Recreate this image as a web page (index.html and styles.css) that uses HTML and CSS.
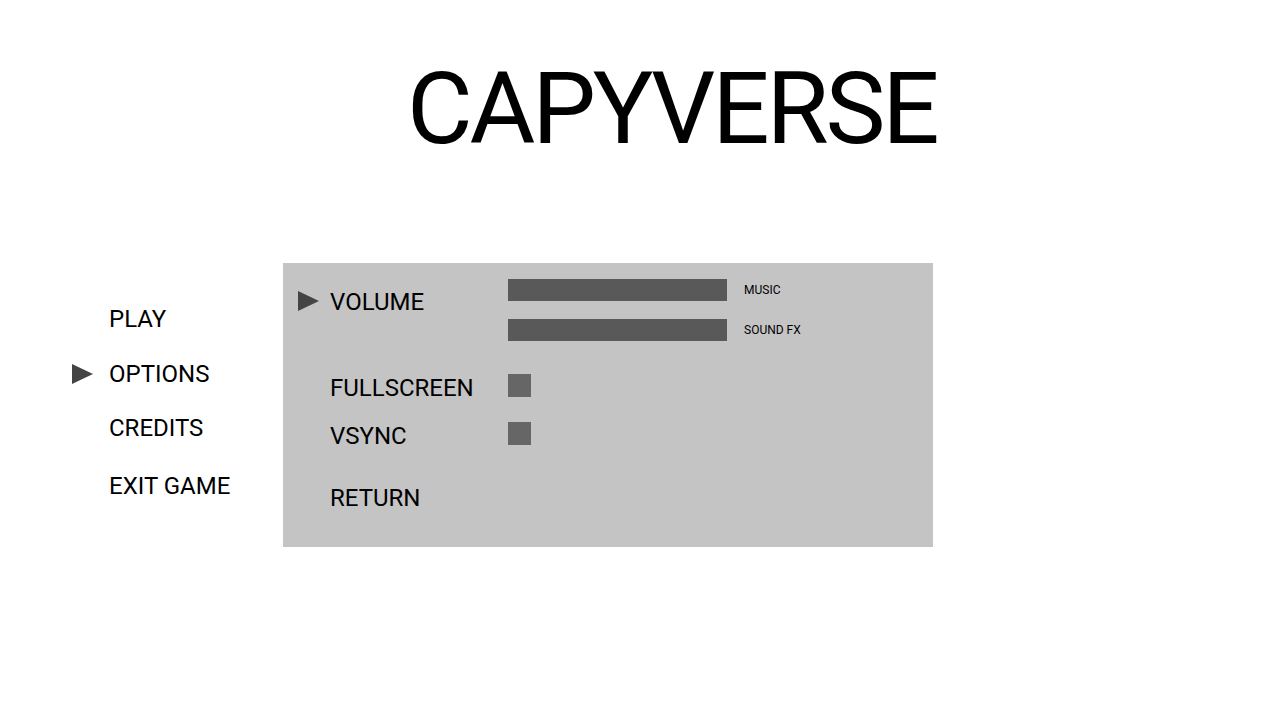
FILE: index.html
```html
<!DOCTYPE html>
<html lang="en">
<head>
    <meta charset="UTF-8">
    <meta name="viewport" content="width=device-width, initial-scale=1.0">
    <title>Capyverse</title>
    <link rel="stylesheet" href="styles.css">
</head>
<body>
    <h1 class="title">CAPYVERSE</h1>

    <div class="main">
        <!-- main menu -->
        <ul class="menu">
            <li class="menuItem"><span class="marker"></span><span>PLAY</span></li>
            <li class="menuItem current"><span class="marker"><span class="arrow"></span></span><span>OPTIONS</span></li>
            <li class="menuItem"><span class="marker"></span><span>CREDITS</span></li>
            <li class="menuItem exit"><span class="marker"></span><span>EXIT GAME</span></li>
        </ul>

        <!-- options panel -->
        <div class="panel">
            <div class="optRow volumeRow">
                <span class="marker"><span class="arrow"></span></span>
                <span class="optLabel">VOLUME</span>
                <div class="sliders">
                    <div class="slider"><span class="bar"></span><span class="small">MUSIC</span></div>
                    <div class="slider"><span class="bar"></span><span class="small">SOUND FX</span></div>
                </div>
            </div>
            <div class="optRow fullRow">
                <span class="marker"></span>
                <span class="optLabel">FULLSCREEN</span>
                <span class="check"></span>
            </div>
            <div class="optRow vsyncRow">
                <span class="marker"></span>
                <span class="optLabel">VSYNC</span>
                <span class="check"></span>
            </div>
            <div class="optRow returnRow">
                <span class="marker"></span>
                <span class="optLabel">RETURN</span>
            </div>
        </div>
    </div>
</body>
</html>
```

FILE: styles.css
```css
body {
    margin: 0;
    font-family: Roboto, "Liberation Sans", sans-serif;
    background: #ffffff;
    color: #000000;
}

.title {
    margin: 49px 0 0 0;
    padding-left: 407px;
    font-size: 101px;
    font-weight: 400;
    letter-spacing: -3.2px;
    line-height: normal;
}

.main {
    display: flex;
    align-items: flex-start;
    margin-top: 95px;
    padding-left: 72px;
}

/* left menu */
.menu {
    list-style: none;
    margin: 0;
    padding: 42px 0 0 0;
    width: 211px;
    display: flex;
    flex-direction: column;
    gap: 26px;
}

.menuItem {
    display: flex;
    align-items: center;
    height: 28px;
    font-size: 24px;
    line-height: 28px;
}

.menuItem .marker {
    width: 37px;
}

.menuItem.current {
    margin-top: 1px;
}

.menuItem.exit {
    margin-top: 4px;
}

.marker {
    display: flex;
    align-items: center;
    flex-shrink: 0;
}

.arrow {
    width: 0;
    height: 0;
    border-top: 10.5px solid transparent;
    border-bottom: 10.5px solid transparent;
    border-left: 21px solid #444444;
}

/* options panel */
.panel {
    width: 650px;
    height: 284px;
    box-sizing: border-box;
    background: #c4c4c4;
    padding: 16px 0 0 15px;
}

.optRow {
    display: flex;
    align-items: flex-start;
    font-size: 24px;
    line-height: 28px;
}

.optRow .marker {
    width: 32px;
    height: 28px;
}

.optLabel {
    width: 178px;
}

.volumeRow .marker {
    margin-top: 8px;
}

.volumeRow .optLabel {
    margin-top: 9px;
}

.sliders {
    display: flex;
    flex-direction: column;
    gap: 18px;
}

.slider {
    display: flex;
    align-items: center;
    height: 22px;
}

.bar {
    width: 219px;
    height: 22px;
    background: #595959;
}

.small {
    margin-left: 17px;
    font-size: 12px;
    line-height: 16px;
}

.check {
    width: 23px;
    height: 23px;
    background: #666666;
}

.fullRow {
    margin-top: 33px;
}

.vsyncRow {
    margin-top: 20px;
}

.returnRow {
    margin-top: 34px;
}
```
